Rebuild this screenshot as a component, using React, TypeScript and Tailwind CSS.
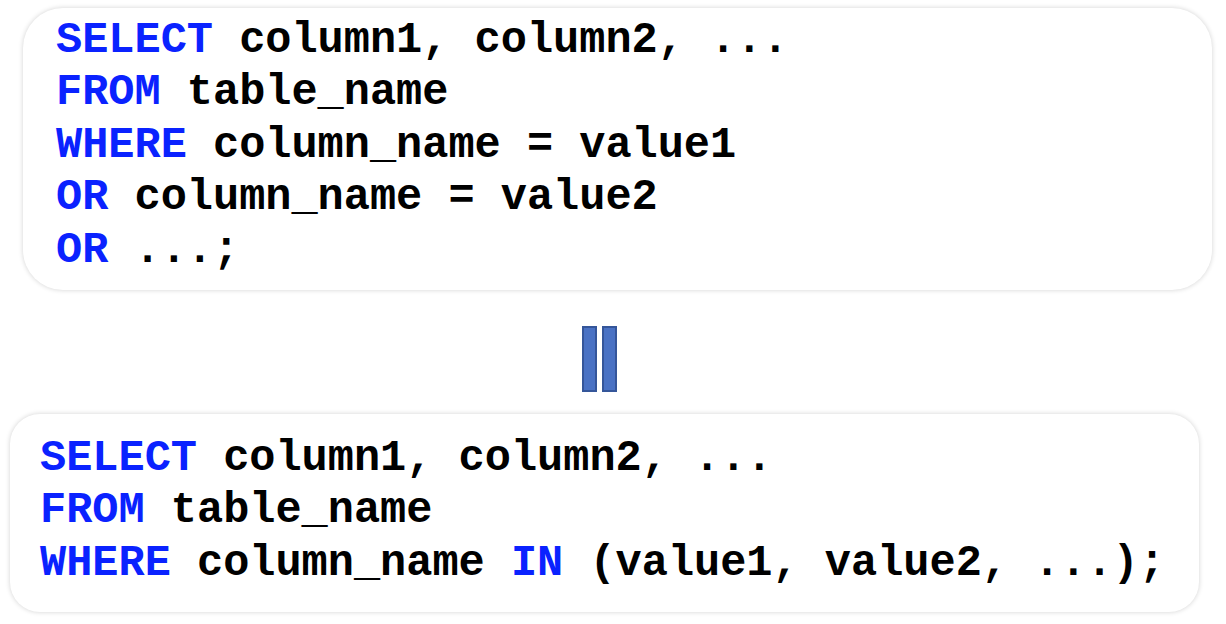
import React from "react";

const K = ({ children }: { children: React.ReactNode }) => (
  <span className="text-[#0a22ff]">{children}</span>
);

export default function App() {
  return (
    <div className="relative w-[1226px] h-[624px] overflow-hidden bg-white">
      <div
        className="flex flex-col text-black font-bold text-[43.6px] leading-[52.4px] whitespace-pre"
        style={{ fontFamily: '"Liberation Mono", "Courier New", monospace' }}
      >
        <div className="ml-[23px] mt-[8px] w-[1189px] h-[282px] rounded-[40px] bg-white shadow-[0_0_5px_rgba(0,0,0,0.18)] pl-[33px] pt-[7px]">
          <div><K>SELECT</K> column1, column2, ...</div>
          <div><K>FROM</K> table_name</div>
          <div><K>WHERE</K> column_name = value1</div>
          <div><K>OR</K> column_name = value2</div>
          <div><K>OR</K> ...;</div>
        </div>
        <div className="ml-[582px] mt-[36px] flex gap-[5px]">
          <div className="w-[15px] h-[66px] bg-[#4a72c4] border-2 border-[#35569a]" />
          <div className="w-[15px] h-[66px] bg-[#4a72c4] border-2 border-[#35569a]" />
        </div>
        <div className="ml-[10px] mt-[22px] w-[1189px] h-[198px] rounded-[30px] bg-white shadow-[0_0_5px_rgba(0,0,0,0.18)] pl-[30px] pt-[19px]">
          <div><K>SELECT</K> column1, column2, ...</div>
          <div><K>FROM</K> table_name</div>
          <div><K>WHERE</K> column_name <K>IN</K> (value1, value2, ...);</div>
        </div>
      </div>
    </div>
  );
}
